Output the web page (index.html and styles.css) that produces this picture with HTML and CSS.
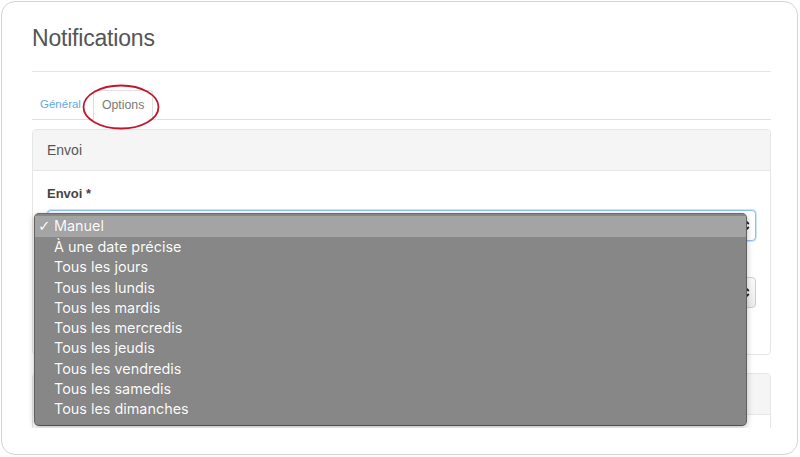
FILE: index.html
```html
<!DOCTYPE html>
<html lang="fr">
<head>
<meta charset="utf-8">
<title>Notifications</title>
<link rel="stylesheet" href="styles.css">
</head>
<body>
<div class="frame">
  <div class="viewport">
    <h1 class="title">Notifications</h1>
    <hr class="rule">
    <ul class="tabs">
      <li class="tab"><a href="#" class="tab-link">Général</a></li>
      <li class="tab tab-active"><span class="tab-link">Options</span>
        <svg class="annot" width="80" height="48" viewBox="0 0 80 48"><ellipse cx="40" cy="24" rx="37.5" ry="21.5" fill="none" stroke="#c2162b" stroke-width="1.8"/></svg>
      </li>
    </ul>
    <section class="panel">
      <div class="panel-head">Envoi</div>
      <div class="panel-body">
        <label class="label">Envoi *</label>
        <div class="field">
          <div class="select select-focus">
            <span class="select-text"></span>
            <svg class="arrows" width="9" height="13" viewBox="0 0 9 13"><path d="M1.2 5 4.5 1.7 7.8 5M1.2 8 4.5 11.3 7.8 8" fill="none" stroke="#222" stroke-width="1.8"/></svg>
          </div>
          <ul class="menu">
            <li class="item item-sel"><span class="check">✓</span>Manuel</li>
            <li class="item">À une date précise</li>
            <li class="item">Tous les jours</li>
            <li class="item">Tous les lundis</li>
            <li class="item">Tous les mardis</li>
            <li class="item">Tous les mercredis</li>
            <li class="item">Tous les jeudis</li>
            <li class="item">Tous les vendredis</li>
            <li class="item">Tous les samedis</li>
            <li class="item">Tous les dimanches</li>
          </ul>
        </div>
        <div class="spacer"></div>
        <div class="select">
          <span class="select-text"></span>
          <svg class="arrows" width="9" height="13" viewBox="0 0 9 13"><path d="M1.2 5 4.5 1.7 7.8 5M1.2 8 4.5 11.3 7.8 8" fill="none" stroke="#222" stroke-width="1.8"/></svg>
        </div>
      </div>
    </section>
    <section class="panel panel-2">
      <div class="panel-head"></div>
      <div class="panel-body"></div>
    </section>
  </div>
</div>
</body>
</html>
```
FILE: styles.css
```css
* { box-sizing: border-box; }
html, body { margin: 0; padding: 0; background: #fff; }
body { font-family: "Liberation Sans", Arial, sans-serif; color: #333; }

.frame {
  margin: 1px;
  width: 797px;
  height: 454px;
  border: 1px solid #d4d4d4;
  border-radius: 14px;
  overflow: hidden;
  background: #fff;
}
.viewport {
  height: 426px;
  overflow: hidden;
  padding: 22px 26px 0 30px;
}
.title {
  margin: 0;
  font-size: 23px;
  line-height: 28px;
  font-weight: normal;
  color: #555;
  letter-spacing: -0.2px;
}
.rule {
  margin: 19px 0 0;
  border: 0;
  border-top: 1px solid #e6e6e6;
  height: 0;
}
.tabs {
  list-style: none;
  margin: 18px 0 0;
  padding: 0;
  display: flex;
  gap: 4px;
  border-bottom: 1px solid #e0e0e0;
  height: 30px;
}
.tab { position: relative; }
.tab-link {
  display: block;
  height: 29px;
  line-height: 29px;
  padding: 0 8px;
  font-size: 11.5px;
  color: #62a8e5;
  text-decoration: none;
}
.tab-active .tab-link {
  color: #7a7a7a;
  font-size: 12.3px;
  border: 1px solid #e0e0e0;
  border-bottom-color: #fff;
  border-radius: 3px 3px 0 0;
  height: 30px;
  line-height: 28px;
  background: #fff;
}
.annot {
  position: absolute;
  left: -12px;
  top: -7px;
  pointer-events: none;
}
.panel {
  margin-top: 9px;
  border: 1px solid #e6e6e6;
  border-radius: 4px;
  height: 226px;
}
.panel-2 { margin-top: 18px; height: 80px; }
.panel-head {
  height: 41px;
  line-height: 40px;
  padding: 0 14px;
  background: #f5f5f5;
  border-bottom: 1px solid #e6e6e6;
  font-size: 14px;
  color: #555;
  border-radius: 4px 4px 0 0;
}
.panel-body { padding: 15px 14px 0; }
.label {
  display: block;
  font-size: 13px;
  line-height: 16px;
  font-weight: bold;
  color: #444;
}
.spacer { height: 30px; }
.field { position: relative; }
.select {
  margin-top: 8px;
  height: 31px;
  border: 1px solid #cfcfcf;
  border-radius: 4px;
  background: linear-gradient(#fbfbfb, #ececec);
  display: flex;
  align-items: center;
  padding: 0 5px 0 10px;
  font-size: 13px;
  color: #444;
}
.spacer + .select { margin-top: 6px; }
.select-focus { border-color: #8fbef0; box-shadow: 0 0 0 1px #cfe3f8; background: #fff; }
.select-text { flex: 1; }
.arrows { display: block; }

.menu {
  position: absolute;
  left: -13px;
  top: 3px;
  width: 713px;
  height: 213px;
  margin: 0;
  padding: 2px 0 0;
  list-style: none;
  background: #878787;
  border: 1px solid #5f5f5f;
  border-top-color: #6a6a6a;
  border-bottom-color: #4e4e4e;
  border-radius: 5px;
  box-shadow: 0 2px 6px rgba(0,0,0,0.25);
  font-family: Inter, "Liberation Sans", sans-serif;
}
.item {
  position: relative;
  height: 20.3px;
  line-height: 20.3px;
  padding-left: 19px;
  font-size: 14.4px;
  color: #fcfcfc;
  white-space: nowrap;
  text-shadow: 0 0 1px rgba(0,0,0,0.15);
}
.item-sel { background: #a4a4a4; height: 21px; }
.check {
  position: absolute;
  left: 3px;
  top: 0;
  font-size: 15px;
  font-family: "DejaVu Sans", sans-serif;
  font-weight: bold;
}
```
